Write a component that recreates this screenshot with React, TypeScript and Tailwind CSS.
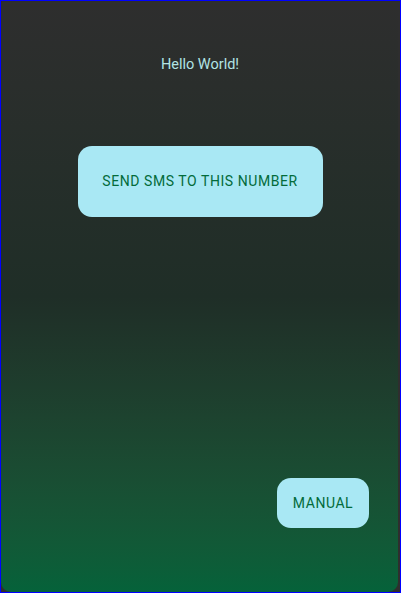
import React from 'react';

export default function App() {
  return (
    <div className="h-[593px] w-[401px] border border-[#0000ff] bg-[#2e2e2e] font-['Roboto',sans-serif]">
      <div className="flex h-full w-[397px] flex-col rounded-b-[10px] bg-gradient-to-b from-[#2e2e2e] via-[#1f2e27] to-[#05623a]">
        <p className="mt-[53px] pl-[1px] text-center text-[14.5px] text-[#b2e4e4]">Hello World!</p>
        <div className="mt-[70px] flex justify-center pl-[1px]">
          <button className="h-[71px] w-[245px] rounded-[14px] bg-[#a9e8f4] text-[14px] tracking-[0.04em] text-[#036b3a]">
            SEND SMS TO THIS NUMBER
          </button>
        </div>
        <div className="mt-auto mb-[64px] flex justify-end pr-[29px]">
          <button className="h-[50px] w-[92px] rounded-[14px] bg-[#a9e8f4] text-[14px] tracking-[0.04em] text-[#036b3a]">
            MANUAL
          </button>
        </div>
      </div>
    </div>
  );
}
